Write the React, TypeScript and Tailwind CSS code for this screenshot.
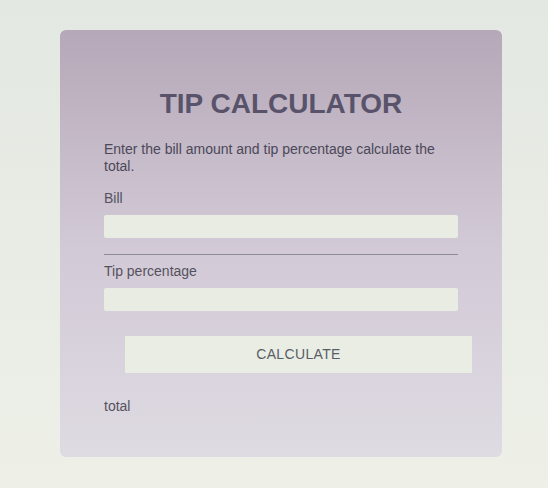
export default function App() {
  return (
    <div className="min-h-[488px] w-full bg-gradient-to-b from-[#e3e8e2] to-[#eef0e8] pt-[30px] font-['Liberation_Sans',Arial,sans-serif]">
      {/* Card */}
      <div className="ml-[60px] w-[442px] rounded-[6px] bg-gradient-to-b from-[#b5a8b8] via-[#d2c9d6] to-[#dedbe2] px-[44px] pb-[42px] pt-[58px]">
        <h1 className="text-center text-[28px] font-bold leading-[32px] text-[#58536a]">
          TIP CALCULATOR
        </h1>

        <p className="mt-[21px] text-[14px] leading-[17px] text-[#4c4858]">
          Enter the bill amount and tip percentage calculate the total.
        </p>

        <label className="mt-[15px] block text-[14px] leading-[17px] text-[#55525e]">
          Bill
        </label>
        <input
          type="text"
          className="mt-[8px] block h-[23px] w-full rounded-[2px] bg-[#e8ece3] outline-none"
        />

        <hr className="mt-[16px] border-t border-[#8d8c96]" />

        <label className="mt-[8px] block text-[14px] leading-[17px] text-[#55525e]">
          Tip percentage
        </label>
        <input
          type="text"
          className="mt-[8px] block h-[23px] w-full rounded-[2px] bg-[#e8ece3] outline-none"
        />

        <button className="ml-[21px] mt-[25px] block h-[37px] w-[347px] bg-[#e9ede4] text-[14px] tracking-wide text-[#585d66]">
          CALCULATE
        </button>

        <p className="mt-[25px] text-[14px] leading-[17px] text-[#55525e]">
          total
        </p>
      </div>
    </div>
  );
}
